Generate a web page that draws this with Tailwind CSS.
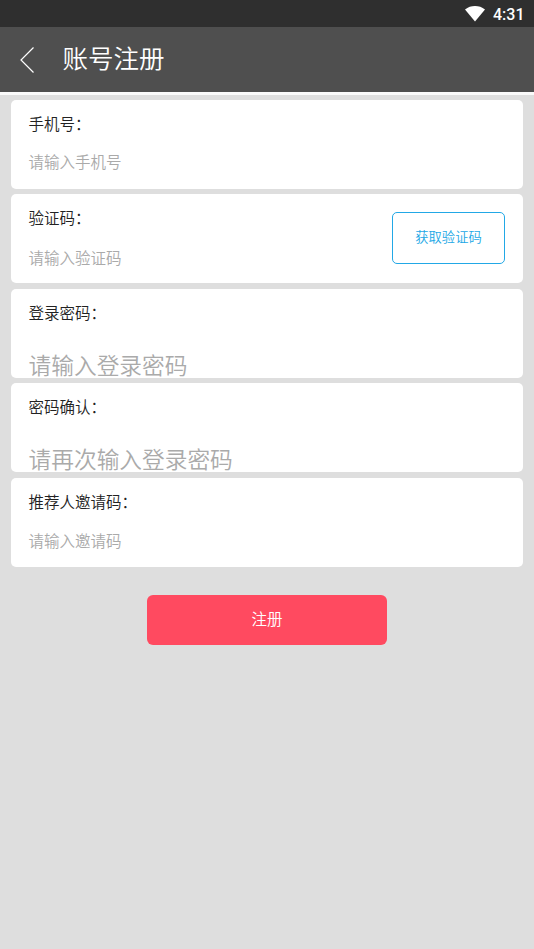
<!DOCTYPE html>
<html lang="zh-CN">
<head>
<meta charset="utf-8">
<title>账号注册</title>
<script src="https://cdn.jsdelivr.net/npm/@tailwindcss/browser@4"></script>
</head>
<body class="min-h-screen bg-[#dedede] font-['Noto_Sans_CJK_SC',sans-serif] text-[15.5px] font-[350] leading-6 text-[#222]">
<div class="flex h-[27px] items-center justify-end bg-[#2f2f2f] pr-[9.5px]">
  <svg class="mr-2 h-4 w-5" viewBox="0 0 20 16" fill="#fff"><path d="M0 3.4Q4.5 0 10 0T20 3.4L10 15.5Z"/></svg>
  <span class="pt-[2px] font-[Roboto,sans-serif] text-[16px] font-medium text-white">4:31</span>
</div>
<header class="flex h-[65px] items-center bg-[#4f4f4f] pl-[20px] text-white">
  <svg class="h-[26px] w-[15px]" viewBox="0 0 15 26" fill="none" stroke="#fff" stroke-width="1.2"><path d="M13.5 .5 1 13l12.5 12.5"/></svg>
  <h1 class="-mt-[5px] ml-[27.5px] text-[25.5px] font-[350] leading-9">账号注册</h1>
</header>
<div class="h-[2.5px] bg-[#fafafa]"></div>
<main class="flex flex-col gap-[5.6px] px-[11px] pt-[5.2px]">
  <section class="h-[89px] rounded-[5px] bg-white pl-[17.6px] pt-[11px]">
    <p>手机号：</p>
    <p class="mt-[14.5px] text-[#aaa]">请输入手机号</p>
  </section>
  <section class="flex h-[89px] items-start justify-between rounded-[5px] bg-white pl-[17.6px] pr-[18px]">
    <div class="pt-[11px]">
      <p>验证码：</p>
      <p class="mt-[15.5px] text-[#aaa]">请输入验证码</p>
    </div>
    <button class="mt-[17.7px] h-[52px] w-[113px] rounded-[5px] border border-[#22a8e6] pb-[2px] text-[13.3px] text-[#22a8e6]">获取验证码</button>
  </section>
  <section class="h-[89px] rounded-[5px] bg-white pl-[17.6px] pt-[11px]">
    <p>登录密码：</p>
    <p class="mt-[27px] text-[22.7px] leading-7 text-[#aaa]">请输入登录密码</p>
  </section>
  <section class="h-[89px] rounded-[5px] bg-white pl-[17.6px] pt-[11px]">
    <p>密码确认：</p>
    <p class="mt-[27px] text-[22.7px] leading-7 text-[#aaa]">请再次输入登录密码</p>
  </section>
  <section class="h-[89px] rounded-[5px] bg-white pl-[17.6px] pt-[11px]">
    <p>推荐人邀请码：</p>
    <p class="mt-[15px] text-[#aaa]">请输入邀请码</p>
  </section>
  <button class="mx-auto mt-[22px] h-[50px] w-[240px] rounded-[6px] bg-[#ff4a60] pb-[4px] text-white">注册</button>
</main>
</body>
</html>
